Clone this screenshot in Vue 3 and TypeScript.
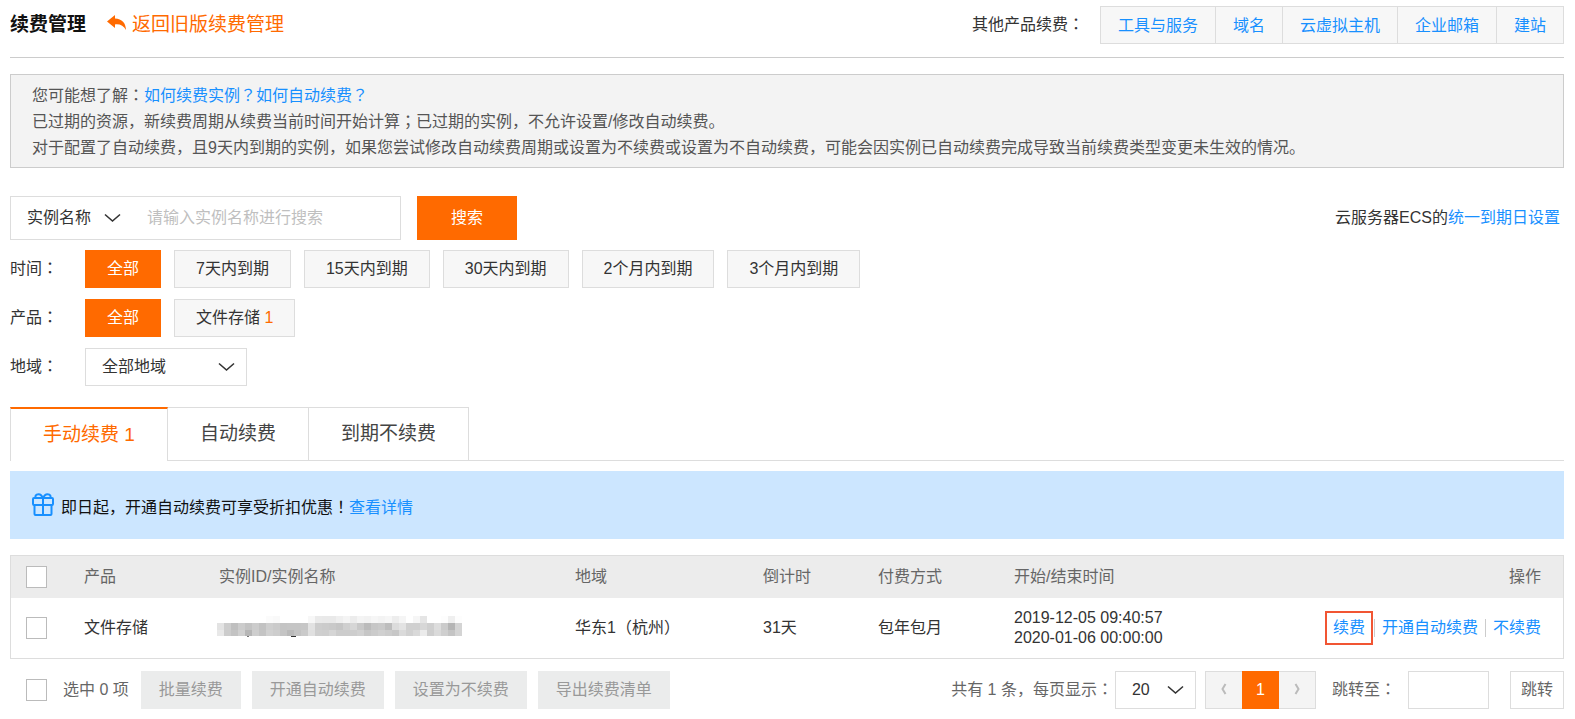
<script setup lang="ts">
import { ref } from 'vue'

interface Option {
  label: string
  count?: number
}

const otherProducts: string[] = ['工具与服务', '域名', '云虚拟主机', '企业邮箱', '建站']
const timeOptions: Option[] = [
  { label: '全部' },
  { label: '7天内到期' },
  { label: '15天内到期' },
  { label: '30天内到期' },
  { label: '2个月内到期' },
  { label: '3个月内到期' },
]
const productOptions: Option[] = [{ label: '全部' }, { label: '文件存储', count: 1 }]
const tabs: Option[] = [{ label: '手动续费', count: 1 }, { label: '自动续费' }, { label: '到期不续费' }]
const bulkActions: string[] = ['批量续费', '开通自动续费', '设置为不续费', '导出续费清单']

const activeTime = ref(0)
const activeProduct = ref(0)
const activeTab = ref(0)
const keyword = ref('')
const jumpTo = ref('')

// Grey levels of the masked instance ID, one hex pair per cell.
const maskRows: string[] = [
  'fffffffffffffffbf9fffffffff7eae9e9eff4ecf4f2f6f3f6edf5fff6e5fffffdeffd',
  'e3cdbfccc3ccc2cecac4c5c5c6e2cdcbc9c5cfd6c8bbc6c9bddce3d0d0d7cfddcbb5d4',
  'e8ccc3d0b6cec4d1cdc4b9c3cae0cfced5cccccdd1c6cbd0ccc7dad1d9ebcedacfc4d4',
]
const maskCells = maskRows.flatMap((row, y) =>
  (row.match(/../g) ?? []).map((level, x) => ({
    x: x * 7,
    y: y * 7,
    height: y === 2 ? 6 : 7,
    fill: `#${level}${level}${level}`,
  })),
)
</script>

<template>
  <main class="page">
    <header class="header">
      <h1>续费管理</h1>
      <a class="back" href="#">
        <svg width="20" height="16" viewBox="0 0 20 16" aria-hidden="true">
          <path d="M8 0 0 6.600 8 13V9.400c5.200-.5 8.600 1.300 11 5.600C18.800 8 15 4 8 3.600Z" fill="#ff6a00" />
        </svg>
        <span>返回旧版续费管理</span>
      </a>
      <span class="other-label">其他产品续费<span class="mark">：</span></span>
      <nav class="others">
        <a v-for="name in otherProducts" :key="name" href="#">{{ name }}</a>
      </nav>
    </header>

    <section class="notice">
      <p>您可能想了解<span class="mark">：</span><a href="#">如何续费实例<span class="mark">？</span></a><a href="#">如何自动续费<span class="mark">？</span></a></p>
      <p>已过期的资源，新续费周期从续费当前时间开始计算<span class="mark">；</span>已过期的实例，不允许设置/修改自动续费。</p>
      <p>对于配置了自动续费，且9天内到期的实例，如果您尝试修改自动续费周期或设置为不续费或设置为不自动续费，可能会因实例已自动续费完成导致当前续费类型变更未生效的情况。</p>
    </section>

    <form class="search" @submit.prevent>
      <div class="search-box">
        <div class="select field-select">
          <select aria-label="搜索字段">
            <option>实例名称</option>
          </select>
          <svg width="17" height="10" viewBox="0 0 17 10" aria-hidden="true"><path d="M1 1.500 8.500 8 16 1.500" /></svg>
        </div>
        <input v-model="keyword" type="text" placeholder="请输入实例名称进行搜索" aria-label="实例名称" />
      </div>
      <button class="primary" type="submit">搜索</button>
      <span class="unified">云服务器ECS的<a href="#">统一到期日设置</a></span>
    </form>

    <div class="filter">
      <span class="filter-label">时间<span class="mark">：</span></span>
      <button
        v-for="(option, i) in timeOptions"
        :key="option.label"
        type="button"
        :class="['chip', { active: i === activeTime }]"
        @click="activeTime = i"
      >{{ option.label }}</button>
    </div>
    <div class="filter">
      <span class="filter-label">产品<span class="mark">：</span></span>
      <button
        v-for="(option, i) in productOptions"
        :key="option.label"
        type="button"
        :class="['chip', { active: i === activeProduct }]"
        @click="activeProduct = i"
      >{{ option.label }}<template v-if="option.count">&nbsp;<span class="count">{{ option.count }}</span></template></button>
    </div>
    <div class="filter">
      <label class="filter-label" for="region">地域<span class="mark">：</span></label>
      <div class="select region-select">
        <select id="region">
          <option>全部地域</option>
        </select>
        <svg width="17" height="10" viewBox="0 0 17 10" aria-hidden="true"><path d="M1 1.500 8.500 8 16 1.500" /></svg>
      </div>
    </div>

    <div class="tabs" role="tablist">
      <button
        v-for="(tab, i) in tabs"
        :key="tab.label"
        type="button"
        role="tab"
        :aria-selected="i === activeTab"
        :class="['tab', { active: i === activeTab }]"
        @click="activeTab = i"
      >{{ tab.label }}<template v-if="tab.count">&nbsp;{{ tab.count }}</template></button>
      <span class="tabs-rest"></span>
    </div>

    <section class="banner">
      <svg width="22" height="24" viewBox="0 0 22 24" fill="none" stroke="#1890ff" stroke-width="2" stroke-linejoin="round" aria-hidden="true">
        <rect x="1" y="5" width="20" height="7" rx="1" />
        <path d="M2.500 12v9q0 1 1 1h15q1 0 1-1v-9M11 5v17" />
        <path d="M11 5.500C10 2.500 8.500 1.300 6.500 1.300 3.500 1.300 2.800 3.500 4 5M11 5.500c1-3 2.500-4.200 4.500-4.200 3 0 3.700 2.200 2.500 3.700" />
      </svg>
      <p>即日起，开通自动续费可享受折扣优惠<span class="mark">！</span><a href="#">查看详情</a></p>
    </section>

    <table class="list">
      <colgroup>
        <col class="col-check" />
        <col class="col-product" />
        <col class="col-id" />
        <col class="col-region" />
        <col class="col-left" />
        <col class="col-pay" />
        <col class="col-time" />
        <col />
      </colgroup>
      <thead>
        <tr>
          <th class="check"><input type="checkbox" aria-label="全选" /></th>
          <th>产品</th>
          <th>实例ID/实例名称</th>
          <th>地域</th>
          <th>倒计时</th>
          <th>付费方式</th>
          <th>开始/结束时间</th>
          <th class="ops-head">操作</th>
        </tr>
      </thead>
      <tbody>
        <tr>
          <td class="check"><input type="checkbox" aria-label="选择该实例" /></td>
          <td>文件存储</td>
          <td class="masked">
            <svg width="245" height="24" viewBox="0 0 245 24" shape-rendering="crispEdges" aria-hidden="true">
              <rect
                v-for="cell in maskCells"
                :key="`${cell.x}-${cell.y}`"
                :x="cell.x"
                :y="cell.y"
                width="7"
                :height="cell.height"
                :fill="cell.fill"
              />
              <rect x="30" y="20" width="2" height="1" fill="#777" />
              <rect x="74" y="20" width="5" height="1" fill="#333" />
            </svg>
          </td>
          <td>华东1（杭州）</td>
          <td>31天</td>
          <td>包年包月</td>
          <td class="times">2019-12-05 09:40:57<br />2020-01-06 00:00:00</td>
          <td>
            <div class="ops">
              <a class="marked" href="#">续费</a>
              <i class="bar"></i>
              <a href="#">开通自动续费</a>
              <i class="bar"></i>
              <a href="#">不续费</a>
            </div>
          </td>
        </tr>
      </tbody>
    </table>

    <footer class="footer">
      <label class="picked"><input type="checkbox" /><span>选中 0 项</span></label>
      <div class="bulk">
        <button v-for="action in bulkActions" :key="action" type="button" disabled>{{ action }}</button>
      </div>
      <label class="total" for="size">共有 1 条，每页显示<span class="mark">：</span></label>
      <div class="select size-select">
        <select id="size">
          <option>20</option>
        </select>
        <svg width="17" height="10" viewBox="0 0 17 10" aria-hidden="true"><path d="M1 1.500 8.500 8 16 1.500" /></svg>
      </div>
      <nav class="pager" aria-label="分页">
        <button type="button" aria-label="上一页" disabled>
          <svg width="6" height="12" viewBox="0 0 6 12" aria-hidden="true"><path d="M4.500 1 1.500 6l3 5" /></svg>
        </button>
        <button class="current" type="button" aria-current="page">1</button>
        <button type="button" aria-label="下一页" disabled>
          <svg width="6" height="12" viewBox="0 0 6 12" aria-hidden="true"><path d="m1.500 1 3 5-3 5" /></svg>
        </button>
      </nav>
      <label class="jump-label" for="jump">跳转至<span class="mark">：</span></label>
      <input id="jump" v-model="jumpTo" class="jump-input" type="text" />
      <button class="jump" type="button">跳转</button>
    </footer>
  </main>
</template>

<style>
body {
  background: #fff;
}
</style>

<style scoped>
.page {
  padding: 6px 11px 10px 10px;
  color: #333;
  font: 16px/24px "Liberation Sans", "Noto Sans CJK SC", sans-serif;
}
.page *,
.page {
  box-sizing: border-box;
}
button,
input,
select {
  margin: 0;
  border-radius: 0;
  font: inherit;
  color: inherit;
}
h1,
p {
  margin: 0;
}
a {
  color: #1890ff;
  text-decoration: none;
}
/* Punctuation centred in its full-width cell */
.mark {
  font-family: "Noto Sans CJK TC", sans-serif;
  line-height: 1;
}

.header {
  display: flex;
  align-items: center;
  height: 52px;
  padding-bottom: 13px;
  border-bottom: 1px solid #ccc;
}
h1 {
  font-size: 19px;
  line-height: 28px;
  color: #111;
}
.back {
  display: flex;
  align-items: center;
  gap: 5px;
  margin-left: 21px;
  font-size: 19px;
  line-height: 28px;
  color: #ff6a00;
}
.back svg {
  margin-bottom: 4px;
}
.other-label {
  margin-left: auto;
}
.others {
  display: flex;
  margin-left: 16px;
  border: 1px solid #ddd;
  border-left: 0;
  background: #f7f7f7;
}
.others a {
  padding: 1px 17px 0;
  border-left: 1px solid #ddd;
  line-height: 35px;
}

.notice {
  margin-top: 16px;
  padding: 8px 21px 6px;
  border: 1px solid #ccc;
  background: #f3f3f3;
  color: #555;
  line-height: 26px;
}

.search {
  display: flex;
  align-items: center;
  margin-top: 28px;
}
.search-box {
  display: flex;
  width: 391px;
  height: 44px;
  border: 1px solid #ddd;
}
.search-box input {
  flex: 1;
  min-width: 0;
  padding: 0;
  border: 0;
  background: none;
  outline: none;
}
.search-box input::placeholder {
  color: #bfbfbf;
}
.select {
  position: relative;
  display: flex;
}
.select select {
  flex: 1;
  width: 100%;
  padding: 0 0 0 16px;
  border: 0;
  background: none;
  appearance: none;
  outline: none;
}
.select svg {
  position: absolute;
  top: 50%;
  right: 11px;
  margin-top: -5px;
  fill: none;
  stroke: #333;
  stroke-width: 1.6;
  pointer-events: none;
}
.field-select {
  width: 136px;
}
.field-select svg {
  right: 26px;
}
.primary {
  width: 100px;
  height: 44px;
  margin-left: 16px;
  padding: 0;
  border: 0;
  background: #ff6a00;
  color: #fff;
}
.unified {
  margin-left: auto;
  padding-right: 4px;
}

.filter {
  display: flex;
  align-items: center;
  gap: 13px;
  height: 38px;
  margin-top: 11px;
}
.search + .filter {
  margin-top: 10px;
}
.filter-label {
  width: 62px;
}
.chip {
  height: 38px;
  padding: 0 21px;
  border: 1px solid #ddd;
  background: #f7f7f7;
}
.chip.active {
  border-color: #ff6a00;
  background: #ff6a00;
  color: #fff;
}
.count {
  color: #ff6a00;
}
.region-select {
  width: 162px;
  height: 38px;
  border: 1px solid #ddd;
}

.tabs {
  display: flex;
  height: 54px;
  margin-top: 21px;
}
.tab {
  padding: 0 32px;
  border: solid #ddd;
  border-width: 1px 1px 1px 0;
  background: #fff;
  color: #444;
  font-size: 19px;
}
.tab.active {
  border-width: 2px 1px 0 1px;
  border-top-color: #ff6a00;
  color: #ff6a00;
}
.tabs-rest {
  flex: 1;
  border-bottom: 1px solid #ddd;
}

.banner {
  display: flex;
  align-items: center;
  gap: 7px;
  height: 68px;
  margin-top: 10px;
  padding-left: 22px;
  background: #cce6ff;
  color: #111;
}
.banner p {
  padding-top: 6px;
}

.list {
  width: 100%;
  margin-top: 16px;
  border: 1px solid #ddd;
  border-spacing: 0;
  table-layout: fixed;
}
.col-check { width: 73px; }
.col-product { width: 135px; }
.col-id { width: 356px; }
.col-region { width: 188px; }
.col-left { width: 115px; }
.col-pay { width: 136px; }
.col-time { width: 152px; }
th {
  height: 42px;
  padding: 0;
  background: #ececec;
  color: #666;
  font-weight: 400;
  text-align: left;
}
td {
  height: 60px;
  padding: 0;
}
.check {
  padding-left: 15px;
}
input[type="checkbox"] {
  display: block;
  width: 21px;
  height: 22px;
  border: 1px solid #bbb;
  background: #fff;
  appearance: none;
}
th.ops-head {
  padding-right: 22px;
  text-align: right;
}
.masked {
  vertical-align: middle;
}
.masked svg {
  display: block;
  margin-left: -2px;
}
.times {
  line-height: 20px;
}
.ops {
  display: flex;
  align-items: center;
  justify-content: flex-end;
  gap: 7px;
  padding-right: 22px;
}
.bar {
  width: 1px;
  height: 18px;
  background: #ccc;
}
.ops .marked {
  margin-right: -6px;
  padding: 3px 6px;
  border: 2px solid #f15533;
}

.footer {
  display: flex;
  align-items: center;
  height: 38px;
  margin-top: 12px;
  color: #666;
}
.picked {
  display: flex;
  align-items: center;
  gap: 16px;
  padding-left: 16px;
}
.bulk {
  display: flex;
  gap: 11px;
  margin-left: 12px;
}
.bulk button {
  height: 38px;
  padding: 0 18px;
  border: 0;
  background: #ebecec;
  color: #999;
}
.total {
  margin-left: auto;
}
.size-select {
  width: 81px;
  height: 38px;
  margin-left: 2px;
  border: 1px solid #ddd;
  color: #333;
}
.pager {
  display: flex;
  margin-left: 9px;
}
.pager button {
  width: 37px;
  height: 38px;
  padding: 0;
  border: 1px solid #ddd;
  background: #f4f4f4;
}
.pager button:first-child {
  border-right: 0;
}
.pager button:last-child {
  border-left: 0;
}
.pager .current {
  border-color: #ff6a00;
  background: #ff6a00;
  color: #fff;
}
.pager svg {
  fill: none;
  stroke: #bbb;
  stroke-width: 2;
}
.jump-label {
  margin-left: 16px;
}
.jump-input {
  width: 81px;
  height: 38px;
  margin-left: 12px;
  padding: 0 8px;
  border: 1px solid #ddd;
}
.jump {
  height: 38px;
  margin-left: 21px;
  padding: 0 10px;
  border: 1px solid #ddd;
  background: #fff;
}
</style>
